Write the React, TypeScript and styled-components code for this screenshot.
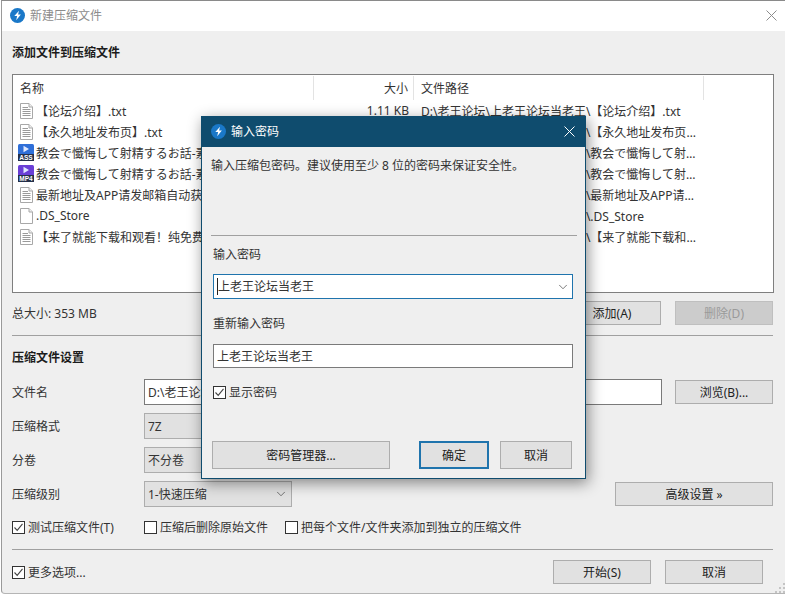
import styled, { createGlobalStyle } from "styled-components";
import { ChevronDown } from "lucide-react";

const files = [
    { name: "【论坛介绍】.txt", size: "1.11 KB", path: "D:\\老王论坛\\上老王论坛当老王\\【论坛介绍】.txt", icon: "text" },
    { name: "【永久地址发布页】.txt", size: "", path: "D:\\老王论坛\\上老王论坛当老王\\【永久地址发布页】.txt", icon: "text" },
    { name: "教会で懺悔して射精するお話-素人", size: "", path: "D:\\老王论坛\\上老王论坛当老王\\教会で懺悔して射精するお話-素人.ass", icon: "ass" },
    { name: "教会で懺悔して射精するお話-素人", size: "", path: "D:\\老王论坛\\上老王论坛当老王\\教会で懺悔して射精するお話-素人.mp4", icon: "mp4" },
    { name: "最新地址及APP请发邮箱自动获取.txt", size: "", path: "D:\\老王论坛\\上老王论坛当老王\\最新地址及APP请发邮箱自动获取.txt", icon: "text" },
    { name: ".DS_Store", size: "", path: "D:\\老王论坛\\上老王论坛当老王\\.DS_Store", icon: "blank" },
    { name: "【来了就能下载和观看！纯免费.txt", size: "", path: "D:\\老王论坛\\上老王论坛当老王\\【来了就能下载和观看！纯免费.txt", icon: "text" }
];

const GlobalStyle = createGlobalStyle`
    html, body {
        margin: 0;
        padding: 0;
        background: #ffffff;
        overflow: hidden;
    }
    body {
        font-family: "Noto Sans", "Noto Sans CJK SC", sans-serif;
        font-size: 12px;
        color: #222222;
    }
`;

const Page = styled.div`
    position: relative;
    width: 786px;
    height: 595px;
    overflow: hidden;
`;

const MainWindow = styled.div`
    width: 784px;
    height: 594px;
    margin-left: 1px;
    border-top: 1px solid #8a8a8a;
    border-left: 1px solid #9a9a9a;
    border-bottom: 1px solid #b5b5b5;
    border-bottom-left-radius: 4px;
    box-sizing: border-box;
    background: #efefef;
    display: flex;
    flex-direction: column;
`;

const TitleBar = styled.div<{ $dark?: boolean }>`
    flex: none;
    box-sizing: border-box;
    height: ${(p) => (p.$dark ? 31 : 30)}px;
    display: flex;
    align-items: center;
    padding: ${(p) => (p.$dark ? "0 10px 1px 9px" : "0 8px 2px 8px")};
    column-gap: 5px;
    background: ${(p) => (p.$dark ? "#0f4c6e" : "#ffffff")};
    color: ${(p) => (p.$dark ? "#ffffff" : "#8c8c8c")};
    font-size: 12px;
`;

const TitleText = styled.span`
    flex: 1;
`;

const MainBody = styled.div`
    flex: 1;
    display: flex;
    flex-direction: column;
    padding: 0 12px 0 10px;
`;

const Heading = styled.div<{ $top: number }>`
    height: 18px;
    line-height: 18px;
    margin-top: ${(p) => p.$top}px;
    font-weight: 700;
    color: #1c1c1c;
`;

const ListBox = styled.div`
    height: 219px;
    margin: 12px -1px 0 0;
    box-sizing: border-box;
    border: 1px solid #7f7f7f;
    background: #ffffff;
    overflow: hidden;
`;

const ListHeader = styled.div`
    display: grid;
    grid-template-columns: 301px 100px 290px;
    height: 24px;
    margin-top: 1px;
`;

const HeaderCell = styled.div<{ $right?: boolean }>`
    display: flex;
    align-items: center;
    justify-content: ${(p) => (p.$right ? "flex-end" : "flex-start")};
    padding: 0 ${(p) => (p.$right ? "5px" : "0")} 0 7px;
    border-right: 1px solid #e3e3e3;
    color: #333333;
`;

const FileRow = styled.div`
    display: grid;
    grid-template-columns: 301px 100px 290px;
    height: 21px;
    align-items: center;
    color: #333333;
`;

const NameCell = styled.div`
    display: flex;
    align-items: center;
    padding-left: 7px;
    column-gap: 3px;
    white-space: nowrap;
    overflow: hidden;
`;

const SizeCell = styled.div`
    text-align: right;
    padding-right: 5px;
`;

const PathCell = styled.div`
    padding-left: 7px;
    padding-right: 5px;
    white-space: nowrap;
    overflow: hidden;
    text-overflow: ellipsis;
`;

const ActionRow = styled.div`
    display: flex;
    align-items: center;
    height: 24px;
    margin-top: 8px;
    column-gap: 14px;
`;

const Grow = styled.div`
    flex: 1;
    color: #333333;
`;

const Button = styled.div<{ $width: number; $height?: number; $disabled?: boolean; $focus?: boolean }>`
    flex: none;
    box-sizing: border-box;
    width: ${(p) => p.$width}px;
    height: ${(p) => p.$height ?? 24}px;
    display: flex;
    align-items: center;
    justify-content: center;
    background: ${(p) => (p.$disabled ? "#cccccc" : "#e1e1e1")};
    border: ${(p) => (p.$focus ? "2px solid #1f74ad" : p.$disabled ? "1px solid #bfbfbf" : "1px solid #adadad")};
    color: ${(p) => (p.$disabled ? "#9a9a9a" : "#222222")};
`;

const Separator = styled.div<{ $top: number }>`
    height: 1px;
    margin-top: ${(p) => p.$top}px;
    background: #a0a0a0;
`;

const FormRow = styled.div<{ $top: number }>`
    display: grid;
    grid-template-columns: 132px 1fr auto;
    align-items: center;
    height: 26px;
    margin-top: ${(p) => p.$top}px;
`;

const FormField = styled.div<{ $gap?: number }>`
    display: flex;
    margin-right: ${(p) => p.$gap ?? 0}px;
`;

const FormLabel = styled.div`
    color: #333333;
`;

const TextBox = styled.div<{ $focus?: boolean; $height?: number }>`
    box-sizing: border-box;
    width: 100%;
    height: ${(p) => p.$height ?? 26}px;
    display: flex;
    align-items: center;
    padding-left: 3px;
    background: #ffffff;
    border: 1px solid ${(p) => (p.$focus ? "#1f74ad" : "#7a7a7a")};
    color: #333333;
`;

const ComboText = styled.span`
    flex: 1;
    border-left: 1px solid #222222;
    line-height: 17px;
`;

const Select = styled.div`
    box-sizing: border-box;
    width: 148px;
    height: 26px;
    display: flex;
    align-items: center;
    justify-content: space-between;
    padding: 0 3px;
    background: #e1e1e1;
    border: 1px solid #adadad;
    color: #333333;
`;

const CheckRow = styled.div`
    display: flex;
    align-items: center;
    height: 18px;
    margin-top: 11px;
`;

const CheckLabel = styled.div<{ $width?: number }>`
    flex: none;
    width: ${(p) => (p.$width ? `${p.$width}px` : "auto")};
    display: flex;
    align-items: center;
    column-gap: 3px;
    color: #333333;
    white-space: nowrap;
`;

const CheckBoxFrame = styled.span`
    flex: none;
    box-sizing: border-box;
    width: 13px;
    height: 13px;
    border: 1px solid #333333;
    background: #ffffff;
    display: flex;
`;

const BottomRow = styled.div`
    display: flex;
    align-items: center;
    height: 24px;
    margin-top: 10px;
    padding-right: 10px;
    column-gap: 14px;
`;

const Grip = styled.svg`
    position: absolute;
    right: 1px;
    bottom: 2px;
`;

const Dialog = styled.div`
    position: absolute;
    left: 201px;
    top: 116px;
    width: 385px;
    height: 363px;
    box-sizing: border-box;
    border: 1px solid #0f4c6e;
    border-top: none;
    background: #efefef;
    box-shadow: 2px 4px 14px rgba(0, 0, 0, 0.45);
    display: flex;
    flex-direction: column;
`;

const DialogBody = styled.div`
    flex: 1;
    display: flex;
    flex-direction: column;
    padding: 0 8px 0 9px;
`;

const DialogText = styled.div<{ $top: number; $inset?: boolean }>`
    height: 18px;
    line-height: 18px;
    margin-top: ${(p) => p.$top}px;
    margin-left: ${(p) => (p.$inset ? 2 : 0)}px;
    color: #333333;
`;

const DialogField = styled.div<{ $top: number }>`
    margin: ${(p) => p.$top}px 4px 0 2px;
    display: flex;
    align-items: center;
`;

const DialogCheck = styled.div`
    height: 18px;
    margin: 15px 0 0 2px;
    display: flex;
    align-items: center;
`;

const DialogButtons = styled.div`
    display: flex;
    margin: 40px 4px 0 1px;
`;

const ButtonGap = styled.div<{ $width: number }>`
    flex: none;
    width: ${(p) => p.$width}px;
`;

const BadgeIcon = styled.svg`
    flex: none;
    margin-left: -2px;
    margin-right: -1px;
`;

const PlainIcon = styled.svg`
    flex: none;
`;

function AppLogo() {
    return (
        <svg width="15" height="15" viewBox="0 0 16 16">
            <circle cx="8" cy="8" r="8" fill="#1a78c8" />
            <path d="M9.6 2.8 L4.6 8.6 L7.6 8.6 L6.6 13 L11.6 7 L8.6 7 Z" fill="#ffffff" />
        </svg>
    );
}

function CloseIcon({ color }: { color: string }) {
    return (
        <svg width="11" height="11" viewBox="0 0 11 11">
            <path d="M0.5 0.5 L10.5 10.5 M10.5 0.5 L0.5 10.5" stroke={color} strokeWidth="1" fill="none" />
        </svg>
    );
}

function CheckBox({ checked }: { checked?: boolean }) {
    return (
        <CheckBoxFrame>
            {checked && (
                <svg width="11" height="11" viewBox="0 0 11 11">
                    <path d="M1.5 5.5 L4.2 8.3 L9.5 1.8" stroke="#444444" strokeWidth="1.1" fill="none" />
                </svg>
            )}
        </CheckBoxFrame>
    );
}

function FileIcon({ kind }: { kind: string }) {
    if (kind === "ass" || kind === "mp4") {
        const color = kind === "ass" ? "#2f6fd8" : "#6a3fd6";
        return (
            <BadgeIcon width="16" height="17" viewBox="0 0 16 17">
                <rect x="0" y="0" width="16" height="11" rx="1.5" fill={color} />
                <path d="M5.5 1.8 L11 5 L5.5 8.2 Z" fill="#dfe8ff" />
                <rect x="0" y="10" width="16" height="7" fill="#24304a" />
                <text x="8" y="16" textAnchor="middle" fontSize="6.5" fontWeight="700" fill="#ffffff" fontFamily="Liberation Sans, sans-serif">
                    {kind.toUpperCase()}
                </text>
            </BadgeIcon>
        );
    }
    return (
        <PlainIcon width="13" height="16" viewBox="0 0 13 16">
            <path d="M0.5 0.5 H9 L12.5 4 V15.5 H0.5 Z" fill="#ffffff" stroke="#a8a8a8" />
            <path d="M9 0.5 V4 H12.5" fill="#eeeeee" stroke="#a8a8a8" />
            {kind === "text" && <path d="M2.5 4.5 H8 M2.5 6.5 H10.5 M2.5 8.5 H10.5 M2.5 10.5 H10.5 M2.5 12.5 H10.5" stroke="#9a9a9a" />}
        </PlainIcon>
    );
}

function Chevron() {
    return <ChevronDown size={14} strokeWidth={1.2} color="#444444" />;
}

export default function App() {
    return (
        <Page>
            <GlobalStyle />
            <MainWindow>
                <TitleBar>
                    <AppLogo />
                    <TitleText>新建压缩文件</TitleText>
                    <CloseIcon color="#8c8c8c" />
                </TitleBar>
                <MainBody>
                    <Heading $top={13}>添加文件到压缩文件</Heading>
                    <ListBox>
                        <ListHeader>
                            <HeaderCell>名称</HeaderCell>
                            <HeaderCell $right>大小</HeaderCell>
                            <HeaderCell>文件路径</HeaderCell>
                        </ListHeader>
                        {files.map((file, i) => (
                            <FileRow key={i}>
                                <NameCell>
                                    <FileIcon kind={file.icon} />
                                    <span>{file.name}</span>
                                </NameCell>
                                <SizeCell>{file.size}</SizeCell>
                                <PathCell>{file.path}</PathCell>
                            </FileRow>
                        ))}
                    </ListBox>
                    <ActionRow>
                        <Grow>总大小: 353 MB</Grow>
                        <Button $width={98}>添加(A)</Button>
                        <Button $width={98} $disabled>删除(D)</Button>
                    </ActionRow>
                    <Separator $top={10} />
                    <Heading $top={13}>压缩文件设置</Heading>
                    <FormRow $top={12}>
                        <FormLabel>文件名</FormLabel>
                        <FormField $gap={13}>
                            <TextBox>D:\老王论坛\上老王论坛当老王.7z</TextBox>
                        </FormField>
                        <Button $width={98}>浏览(B)...</Button>
                    </FormRow>
                    <FormRow $top={8}>
                        <FormLabel>压缩格式</FormLabel>
                        <FormField>
                            <Select>7Z<Chevron /></Select>
                        </FormField>
                    </FormRow>
                    <FormRow $top={8}>
                        <FormLabel>分卷</FormLabel>
                        <FormField>
                            <Select>不分卷<Chevron /></Select>
                        </FormField>
                    </FormRow>
                    <FormRow $top={8}>
                        <FormLabel>压缩级别</FormLabel>
                        <FormField>
                            <Select>1-快速压缩<Chevron /></Select>
                        </FormField>
                        <Button $width={158}>高级设置 »</Button>
                    </FormRow>
                    <CheckRow>
                        <CheckLabel $width={132}><CheckBox checked />测试压缩文件(T)</CheckLabel>
                        <CheckLabel $width={141}><CheckBox />压缩后删除原始文件</CheckLabel>
                        <CheckLabel><CheckBox />把每个文件/文件夹添加到独立的压缩文件</CheckLabel>
                    </CheckRow>
                    <Separator $top={13} />
                    <BottomRow>
                        <Grow>
                            <CheckLabel><CheckBox checked />更多选项...</CheckLabel>
                        </Grow>
                        <Button $width={98}>开始(S)</Button>
                        <Button $width={98}>取消</Button>
                    </BottomRow>
                </MainBody>
            </MainWindow>
            <Grip width="10" height="10" viewBox="0 0 10 10">
                <path d="M8 0h2v2H8z M4 4h2v2H4z M8 4h2v2H8z M0 8h2v2H0z M4 8h2v2H4z M8 8h2v2H8z" fill="#c4c4c4" />
            </Grip>
            <Dialog>
                <TitleBar $dark>
                    <AppLogo />
                    <TitleText>输入密码</TitleText>
                    <CloseIcon color="#ffffff" />
                </TitleBar>
                <DialogBody>
                    <DialogText $top={10}>输入压缩包密码。建议使用至少 8 位的密码来保证安全性。</DialogText>
                    <Separator $top={60} />
                    <DialogText $top={10} $inset>输入密码</DialogText>
                    <DialogField $top={10}>
                        <TextBox $focus $height={25}>
                            <ComboText>上老王论坛当老王</ComboText>
                            <Chevron />
                            <ButtonGap $width={2} />
                        </TextBox>
                    </DialogField>
                    <DialogText $top={16} $inset>重新输入密码</DialogText>
                    <DialogField $top={11}>
                        <TextBox $height={24}>上老王论坛当老王</TextBox>
                    </DialogField>
                    <DialogCheck>
                        <CheckLabel><CheckBox checked />显示密码</CheckLabel>
                    </DialogCheck>
                    <DialogButtons>
                        <Button $width={178} $height={28}>密码管理器...</Button>
                        <ButtonGap $width={29} />
                        <Button $width={70} $height={28} $focus>确定</Button>
                        <ButtonGap $width={11} />
                        <Button $width={72} $height={28}>取消</Button>
                    </DialogButtons>
                </DialogBody>
            </Dialog>
        </Page>
    );
}
